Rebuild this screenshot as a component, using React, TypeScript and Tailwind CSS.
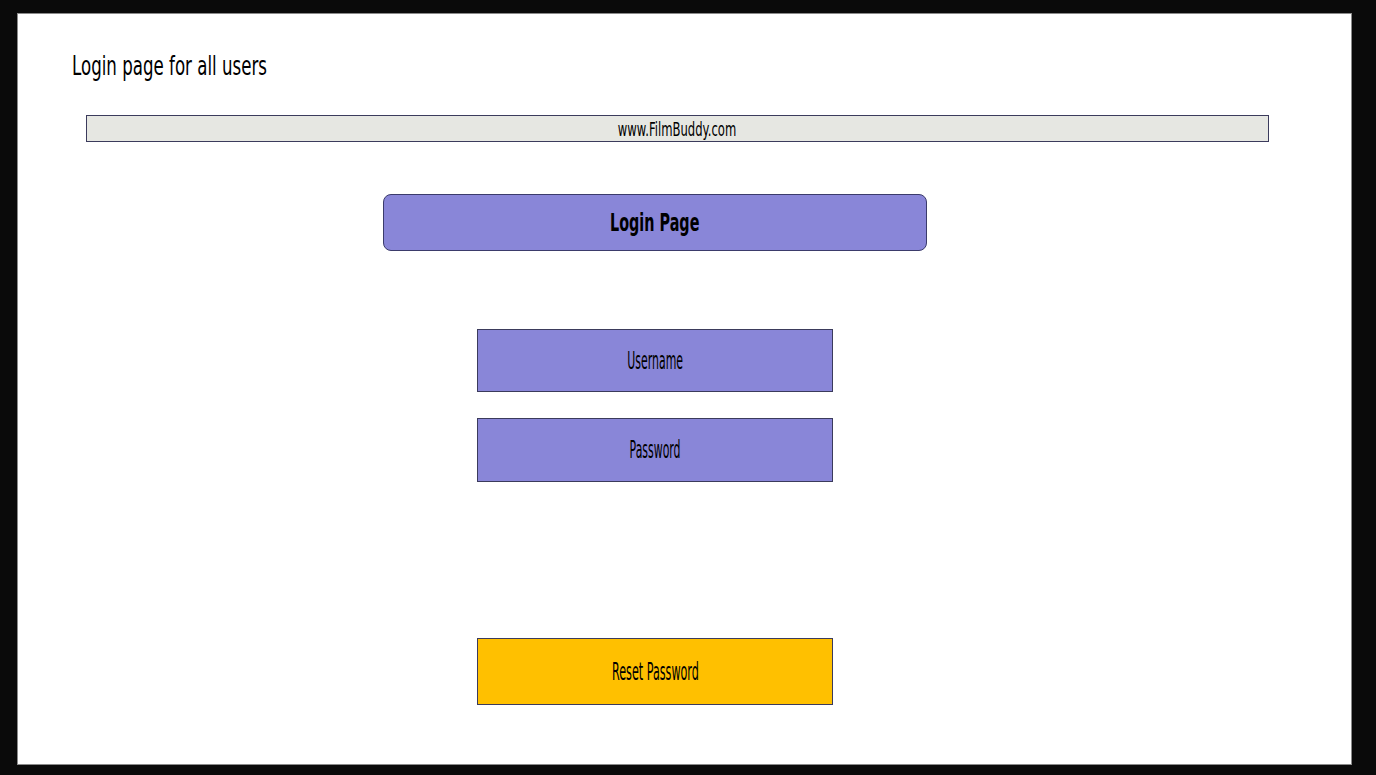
export default function App() {
  const font = { fontFamily: '"DejaVu Sans", "Liberation Sans", sans-serif' } as const;
  return (
    <div className="h-[775px] w-[1376px] bg-[#0a0a0a] pt-[13px] pl-[17px]">
      <div
        className="flex h-[752px] w-[1335px] flex-col border border-[#8a8a8a] bg-white"
        style={font}
      >
        <h1 className="ml-[54px] mt-[38px] text-[26px] leading-[28px] font-normal text-black">
          <span className="inline-block origin-left scale-x-[0.64] whitespace-nowrap">
            Login page for all users
          </span>
        </h1>

        <div className="ml-[68px] mt-[35px] flex h-[27px] w-[1183px] items-center justify-center border border-[#3b3b5c] bg-[#e6e7e2]">
          <span className="inline-block scale-x-[0.58] whitespace-nowrap text-[20px] font-normal text-black">
            www.FilmBuddy.com
          </span>
        </div>

        <div className="ml-[365px] mt-[52px] flex h-[57px] w-[544px] items-center justify-center rounded-[8px] border border-[#3b3b6b] bg-[#8986d8]">
          <span className="inline-block scale-x-[0.575] whitespace-nowrap text-[25px] font-bold text-black">
            Login Page
          </span>
        </div>

        <div className="ml-[459px] mt-[78px] flex h-[63px] w-[356px] items-center justify-center border border-[#3b3b5c] bg-[#8986d8]">
          <span className="inline-block scale-x-[0.455] whitespace-nowrap text-[24px] font-normal text-black">
            Username
          </span>
        </div>

        <div className="ml-[459px] mt-[26px] flex h-[64px] w-[356px] items-center justify-center border border-[#3b3b5c] bg-[#8986d8]">
          <span className="inline-block scale-x-[0.455] whitespace-nowrap text-[24px] font-normal text-black">
            Password
          </span>
        </div>

        <div className="ml-[459px] mt-[156px] flex h-[67px] w-[356px] items-center justify-center border border-[#3b3b5c] bg-[#ffc000]">
          <span className="inline-block scale-x-[0.465] whitespace-nowrap text-[24px] font-normal text-black">
            Reset Password
          </span>
        </div>
      </div>
    </div>
  );
}
